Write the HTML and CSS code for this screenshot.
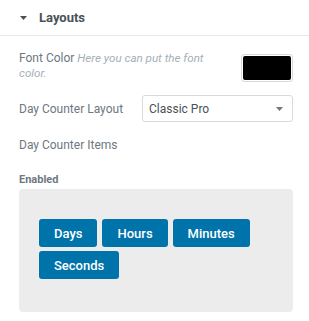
FILE: index.html
```html
<!DOCTYPE html>
<html lang="en">
<head>
    <meta charset="UTF-8">
    <meta name="viewport" content="width=device-width, initial-scale=1.0">
    <title>Layouts</title>
    <link rel="stylesheet" href="styles.css">
</head>
<body>
    <!-- Section header -->
    <div class="section-head">
        <svg class="caret" width="7" height="4" viewBox="0 0 7 4"><path d="M0 0h7L3.5 4z" fill="#495157"/></svg>
        <span class="section-title">Layouts</span>
    </div>

    <div class="controls">
        <div class="control color-control">
            <div class="label">Font Color <span class="hint">Here you can put the font color.</span></div>
            <div class="swatch"><div class="swatch-inner"></div></div>
        </div>

        <div class="control select-control">
            <div class="label">Day Counter Layout</div>
            <div class="select">
                <span>Classic Pro</span>
                <svg width="7" height="4" viewBox="0 0 7 4"><path d="M0 0h7L3.5 4z" fill="#6d7882"/></svg>
            </div>
        </div>

        <div class="control items-control">
            <div class="label">Day Counter Items</div>
        </div>

        <div class="enabled-title">Enabled</div>
        <div class="items-box">
            <span class="item">Days</span>
            <span class="item">Hours</span>
            <span class="item">Minutes</span>
            <span class="item">Seconds</span>
        </div>
    </div>
</body>
</html>
```

FILE: styles.css
```css
body {
    margin: 0;
    padding: 0;
    background-color: #ffffff;
    font-family: Roboto, Arial, sans-serif;
    color: #6d7882;
}

.section-head {
    display: flex;
    align-items: center;
    height: 35px;
    padding-left: 20px;
    border-bottom: 1px solid #e6e9ec;
}

.caret {
    margin-right: 12px;
}

.section-title {
    font-size: 13px;
    font-weight: 700;
    color: #495157;
}

.controls {
    padding: 0 16px 0 19px;
}

.control {
    display: flex;
    align-items: center;
    justify-content: space-between;
}

.label {
    font-size: 12px;
    line-height: 16px;
}

.color-control {
    align-items: flex-start;
    margin-top: 15px;
}

.color-control .label {
    width: 200px;
    line-height: 15px;
}

.hint {
    font-size: 11.6px;
    font-style: italic;
    color: #a4afb7;
}

.swatch {
    width: 48px;
    height: 24px;
    padding: 1px;
    border: 1px solid #d5dadf;
    border-radius: 3px;
    margin-top: 3px;
}

.swatch-inner {
    width: 100%;
    height: 100%;
    background-color: #000000;
    border-radius: 2px;
}

.select-control {
    margin-top: 13px;
}

.select {
    display: flex;
    align-items: center;
    justify-content: space-between;
    box-sizing: border-box;
    width: 151px;
    height: 27px;
    padding: 0 9px 0 6px;
    border: 1px solid #d5dadf;
    border-radius: 3px;
    font-size: 12px;
    color: #495157;
}

.items-control {
    margin-top: 15px;
}

.enabled-title {
    margin-top: 20px;
    font-size: 11px;
    font-weight: 700;
    line-height: 14px;
}

.items-box {
    display: flex;
    flex-wrap: wrap;
    align-content: flex-start;
    gap: 4px 5px;
    height: 123px;
    box-sizing: border-box;
    margin-top: 2px;
    padding: 30px 20px;
    background-color: #ececec;
    border-radius: 4px;
}

.item {
    display: flex;
    align-items: center;
    height: 28px;
    padding: 0 15px;
    background-color: #0073aa;
    border-radius: 3px;
    color: #ffffff;
    font-size: 13px;
    font-weight: 500;
}
```
